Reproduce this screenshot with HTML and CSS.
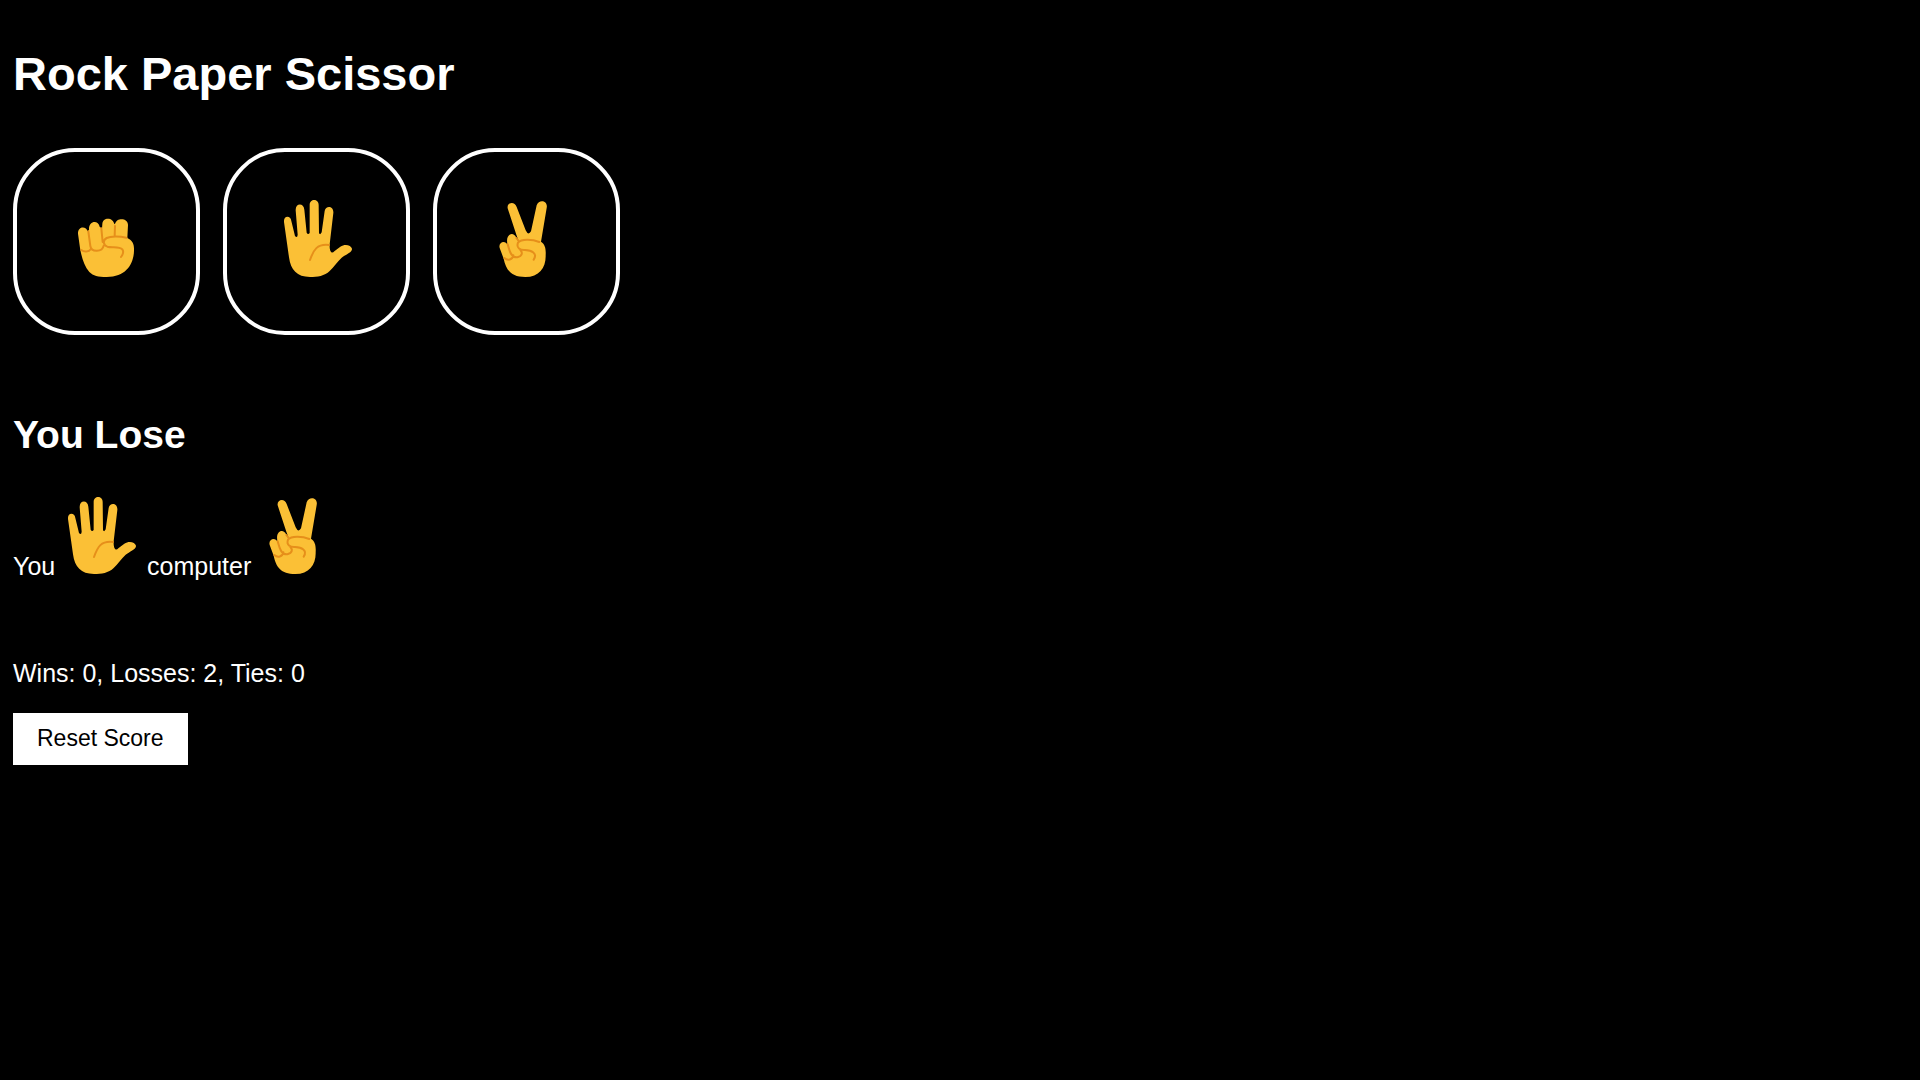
FILE: index.html
```
<!DOCTYPE html>
<html lang="en">
<head>
<meta charset="utf-8">
<meta name="viewport" content="width=device-width, initial-scale=1">
<title>Rock Paper Scissor</title>
<link rel="stylesheet" href="styles.css">
</head>
<body>
<svg class="sprite" aria-hidden="true">
  <symbol id="rock" viewBox="0 0 234 234">
    <g transform="translate(6 30)">
      <path class="skin" d="M24 71C23 48 49 47 53 64L57 60C55 30 86 30 89 50L96 56L97 42C98 20 130 21 133 43L136 40C139 23 174 22 174 45L172 84C189 91 193 105 192 122C191 160 170 201 110 201C84 201 70 198 58 186C42 168 34 138 30 114Z"/>
      <path class="crease" d="M34 120C42 127 57 126 62 118M55 64L61 108C64 128 97 127 101 107M94 55L98 96M135 48L134 77M169 83C148 78 122 78 110 84C97 91 100 106 112 110C126 114 148 107 157 118C162 125 159 133 153 141"/>
    </g>
  </symbol>
  <symbol id="paper" viewBox="0 0 234 234">
    <g transform="translate(-9 -30)">
      <path class="skin" d="M27 96C25 76 47 76 49 93L60 138Q67 145 68 134L62 61C61 39 86 38 88 59L95 128Q99 135 104 129V45C104 25 131 25 131 45L132 130Q136 136 140 127L149 63C152 45 177 47 175 69L164 163C163 182 169 194 178 184L196 170C211 160 228 166 231 176C232 187 211 194 200 203C187 215 176 231 164 243C149 258 127 261 105 261C66 261 47 240 42 202Z"/>
      <path class="crease" d="M162 165C126 161 116 179 105 210"/>
    </g>
  </symbol>
  <symbol id="scissors" viewBox="0 0 234 234">
    <g transform="translate(6 -30)">
      <path class="skin" d="M53 55C50 37 74 32 80 51L107 121Q115 138 123 124L140 46C147 26 175 32 170 54L153 155C166 163 168 178 167 196C168 233 148 261 106 261C62 261 48 239 41 206L29 174C24 156 46 149 53 165C44 132 70 122 79 143L87 156L79 134Z"/>
      <path class="crease" d="M43 204C53 213 68 209 70 196M53 163C57 177 62 204 82 202C98 198 98 187 91 180M79 144L86 153M148 156C128 148 94 145 84 158C78 174 91 181 105 180C124 181 144 189 131 209"/>
    </g>
  </symbol>
</svg>

<main class="game">
  <h1 class="title">Rock Paper Scissor</h1>

  <div class="moves">
    <button class="move" type="button" aria-label="Rock"><svg class="hand"><use href="#rock"/></svg></button>
    <button class="move" type="button" aria-label="Paper"><svg class="hand"><use href="#paper"/></svg></button>
    <button class="move" type="button" aria-label="Scissors"><svg class="hand"><use href="#scissors"/></svg></button>
  </div>

  <h2 class="result">You Lose</h2>
  <p class="picks">You <svg class="hand" role="img" aria-label="Paper"><use href="#paper"/></svg> computer <svg class="hand" role="img" aria-label="Scissors"><use href="#scissors"/></svg></p>
  <p class="score">Wins: 0, Losses: 2, Ties: 0</p>
  <button class="reset" type="button">Reset Score</button>
</main>
</body>
</html>
```
FILE: styles.css
```
* {
  box-sizing: border-box;
}

body {
  margin: 0;
  background: #000;
  color: #fff;
  font: 25px/28px "Liberation Sans", Arial, sans-serif;
}

.sprite {
  display: none;
}

.skin {
  fill: #fbc036;
}

.crease {
  fill: none;
  stroke: #e68f1a;
  stroke-width: 6;
  stroke-linecap: round;
  stroke-linejoin: round;
}

.game {
  padding: 47px 13px;
}

.title {
  margin: 0 0 47px;
  font-size: 47px;
  line-height: 54px;
}

.moves {
  display: flex;
  flex-wrap: wrap;
  gap: 23px;
}

.move {
  display: flex;
  align-items: center;
  justify-content: center;
  width: 187px;
  height: 187px;
  padding: 0 0 5px;
  border: 4px solid #fff;
  border-radius: 62px;
  background: transparent;
  cursor: pointer;
}

.hand {
  width: 78px;
  height: 78px;
}

.result {
  margin: 78px 0 40px;
  font-size: 39px;
  line-height: 44px;
}

.picks {
  margin: 0 0 79px;
}

.score {
  margin: 0 0 26px;
}

.reset {
  padding: 12px 24px 13px;
  border: 0;
  background: #fff;
  color: #000;
  font: 23px/27px "Liberation Sans", Arial, sans-serif;
  cursor: pointer;
}
```
